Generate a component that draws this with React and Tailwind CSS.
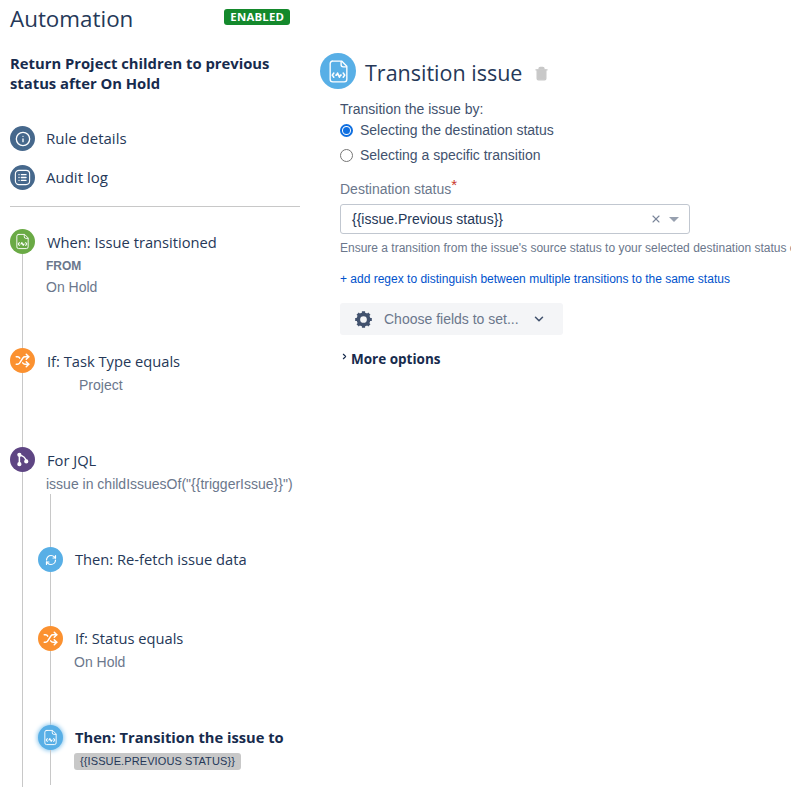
import { Shuffle, RefreshCw, Info, Trash2, ChevronDown, ChevronRight, X } from 'lucide-react';

const titleFont = "font-['Open_Sans',sans-serif]";

// document with a little wave through it, used by the transition steps
function IssueIcon({ size = 17 }) {
  return (
    <svg width={size} height={size} viewBox="0 0 24 24" fill="none" stroke="currentColor" strokeWidth="1.3" strokeLinejoin="round" strokeLinecap="round">
      <path d="M7 2h8l5 5v12.500a2.500 2.500 0 0 1-2.500 2.500h-11A2.500 2.500 0 0 1 4 19.500v-15A2.500 2.500 0 0 1 7 2z" />
      <path d="M14.500 2.500v3a2 2 0 0 0 2 2h3" />
      <path d="M7.500 13.500l-1.500 2 1.500 2M16.500 13.500l1.500 2-1.500 2M9.500 15.500h.6l1-2 1.800 4 1-2h.6" strokeWidth="1.500" />
    </svg>
  );
}

function ListIcon() {
  return (
    <svg width="19" height="19" viewBox="0 0 24 24" fill="none" stroke="currentColor" strokeWidth="1.400" strokeLinecap="round">
      <rect x="3" y="3" width="18" height="18" rx="4.500" />
      <path d="M10.500 8.500h6M10.500 12h6M10.500 15.500h6M7.500 8.500h.2M7.500 12h.2M7.500 15.500h.2" strokeWidth="1.600" />
    </svg>
  );
}

function BranchIcon() {
  return (
    <svg width="15" height="15" viewBox="0 0 24 24" fill="currentColor" stroke="currentColor" strokeWidth="2.400">
      <circle cx="7" cy="4.500" r="2.200" />
      <circle cx="7" cy="19.500" r="2.200" />
      <circle cx="18" cy="15" r="2.200" />
      <path d="M7 4.500v15M7 5c6 1 10 4 11 10" fill="none" />
    </svg>
  );
}

function GearIcon() {
  return (
    <svg width="19" height="19" viewBox="0 0 24 24" fill="none" stroke="currentColor">
      <circle cx="12" cy="12" r="6.500" strokeWidth="4.500" />
      <path d="M12 1.500v4M12 18.500v4M1.500 12h4M18.500 12h4M4.600 4.600l2.800 2.800M16.600 16.600l2.800 2.800M19.400 4.600l-2.800 2.800M7.400 16.600l-2.800 2.800" strokeWidth="4" />
    </svg>
  );
}

function Circle({ color, glow, children }) {
  return (
    <div className={`flex h-[25px] w-[25px] shrink-0 items-center justify-center rounded-full text-white ${color} ${glow ? 'shadow-[0_0_4px_1px_#8ec9ee]' : ''}`}>
      {children}
    </div>
  );
}

function Step({ icon, color, glow, height, children }) {
  return (
    <div className="flex" style={{ minHeight: height }}>
      <div className="flex w-[25px] shrink-0 flex-col items-center">
        <Circle color={color} glow={glow}>{icon}</Circle>
        <div className="w-px flex-1 bg-[#c8c8c8]" />
      </div>
      <div className="ml-[12px] min-w-0 flex-1">{children}</div>
    </div>
  );
}

function StepTitle({ bold, nested, children }) {
  return (
    <div className={`${titleFont} ${nested ? 'mt-[2px]' : 'mt-[3px]'} whitespace-nowrap text-[14.700px] leading-[20px] ${bold ? 'font-bold text-[#172b4d]' : 'text-[#253858]'}`}>
      {children}
    </div>
  );
}

function Sub({ className = '', children }) {
  return <div className={`font-['Liberation_Sans',sans-serif] whitespace-nowrap text-[14px] leading-[20px] text-[#6b778c] ${className}`}>{children}</div>;
}

function Radio({ checked, children }) {
  return (
    <label className="flex h-[25px] items-center">
      {checked ? (
        <span className="flex h-[13px] w-[13px] items-center justify-center rounded-full border-2 border-[#0f6fe0]">
          <span className="h-[7px] w-[7px] rounded-full bg-[#0f6fe0]" />
        </span>
      ) : (
        <span className="h-[13px] w-[13px] rounded-full border border-[#767676]" />
      )}
      <span className="ml-[7px]">{children}</span>
    </label>
  );
}

export default function App() {
  return (
    <div className="flex h-[787px] w-[791px] overflow-hidden bg-white text-[#172b4d]">
      {/* left column, rule outline */}
      <div className="ml-[10px] w-[290px] shrink-0">
        <div className="flex h-[38px] items-start">
          <h1 className={`${titleFont} text-[22.400px] leading-[38px] text-[#253858]`}>Automation</h1>
          <span className={`${titleFont} ml-[91px] mt-[9px] rounded-[3px] bg-[#14892c] px-[6px] text-[11.400px] font-bold leading-[16px] tracking-[0.2px] text-white`}>ENABLED</span>
        </div>
        <h2 className={`${titleFont} mt-[15px] text-[14.800px] font-bold leading-[20px] text-[#172b4d]`}>
          Return Project children to previous<br />status after On Hold
        </h2>

        <div className="mt-[33px] flex items-center">
          <Circle color="bg-[#46688c]"><Info size={16} strokeWidth={2} /></Circle>
          <span className={`${titleFont} ml-[11px] text-[15px] text-[#253858]`}>Rule details</span>
        </div>
        <div className="mt-[14px] flex items-center">
          <Circle color="bg-[#46688c]"><ListIcon /></Circle>
          <span className={`${titleFont} ml-[11px] text-[15px] text-[#253858]`}>Audit log</span>
        </div>
        <div className="mt-[16px] h-px bg-[#c8c8c8]" />

        <div className="mt-[22px]">
          <Step icon={<IssueIcon />} color="bg-[#6aaa45]" height={119}>
            <StepTitle>When: Issue transitioned</StepTitle>
            <div className="-ml-px mt-[4px] font-['Liberation_Sans',sans-serif] text-[12px] font-bold leading-[20px] text-[#6b778c]">FROM</div>
            <Sub className="-ml-px mt-px">On Hold</Sub>
          </Step>
          <Step icon={<Shuffle size={15} strokeWidth={2.400} />} color="bg-[#fb9130]" height={99}>
            <StepTitle>If: Task Type equals</StepTitle>
            <Sub className="ml-[32px] mt-[4px]">Project</Sub>
          </Step>
          <Step icon={<BranchIcon />} color="bg-[#5e4583]" height={360}>
            <StepTitle>For JQL</StepTitle>
            <Sub className="-ml-px mt-[4px]">issue in childIssuesOf("{'{{'}triggerIssue{'}}'}")</Sub>
            <div className="-ml-[9px]">
              <div className="ml-[12px] h-[53px] w-px bg-[#c8c8c8]" />
              <Step icon={<RefreshCw size={12} strokeWidth={2.400} />} color="bg-[#58afe6]" height={79}>
                <StepTitle nested>Then: Re-fetch issue data</StepTitle>
              </Step>
              <Step icon={<Shuffle size={15} strokeWidth={2.400} />} color="bg-[#fb9130]" height={99}>
                <StepTitle nested>If: Status equals</StepTitle>
                <Sub className="-ml-px mt-[4px]">On Hold</Sub>
              </Step>
              <Step icon={<IssueIcon />} color="bg-[#58afe6]" glow height={60}>
                <StepTitle bold nested>Then: Transition the issue to</StepTitle>
                <div className="-ml-px mt-[4px] inline-block rounded-[3px] bg-[#c8c8c8] px-[6px] font-['Liberation_Sans',sans-serif] text-[11px] leading-[17px] tracking-[0.100px] text-[#253858]">
                  {'{{'}ISSUE.PREVIOUS STATUS{'}}'}
                </div>
              </Step>
            </div>
          </Step>
        </div>
      </div>

      {/* right column, selected step */}
      <div className="ml-[20px] min-w-0 flex-1 font-['Liberation_Sans',sans-serif] text-[14px] text-[#42526e]">
        <div className="mt-[53px] flex h-[36px] items-start">
          <div className="flex h-[36px] w-[36px] items-center justify-center rounded-full bg-[#58afe6] text-white">
            <IssueIcon size={25} />
          </div>
          <span className={`${titleFont} ml-[9px] mt-[2px] text-[21.500px] leading-[36px] text-[#253858]`}>Transition issue</span>
          <Trash2 size={15} className="ml-[12px] mt-[13px] fill-[#c8c8c8] text-[#c8c8c8]" />
        </div>

        <div className="ml-[20px]">
          <div className="mt-[11px] leading-[18px]">Transition the issue by:</div>
          <Radio checked>Selecting the destination status</Radio>
          <Radio>Selecting a specific transition</Radio>

          <div className="mt-[12px] leading-[18px] text-[#6b778c]">
            Destination status<sup className="top-[-4px] text-[15px] text-[#c9372c]">*</sup>
          </div>
          <div className="mt-[6px] flex h-[30px] w-[350px] items-center rounded-[3px] border border-[#c1c7d0] pl-[11px] pr-[10px] text-[#253858]">
            <span className="flex-1">{'{{'}issue.Previous status{'}}'}</span>
            <X size={12} strokeWidth={2.200} className="text-[#7a869a]" />
            <span className="ml-[7px] h-0 w-0 border-x-[5px] border-t-[5px] border-x-transparent border-t-[#97a0af]" />
          </div>
          <div className="mt-[6px] whitespace-nowrap text-[12px] leading-[16px] text-[#6b778c]">
            Ensure a transition from the issue's source status to your selected destination status exists.
          </div>
          <div className="mt-[15px] whitespace-nowrap text-[12px] leading-[16px] text-[#0052cc]">
            + add regex to distinguish between multiple transitions to the same status
          </div>
          <div className="mt-[16px] flex h-[32px] w-[223px] items-center rounded-[3px] bg-[#f4f5f7] pl-[14px]">
            <GearIcon />
            <span className="ml-[11px] text-[#6b778c]">Choose fields to set...</span>
            <ChevronDown size={14} strokeWidth={2.600} className="ml-[13px] text-[#42526e]" />
          </div>
          <div className="mt-[14px] flex items-center">
            <ChevronRight size={9} strokeWidth={3} className="mb-[5px] text-[#172b4d]" />
            <span className={`${titleFont} ml-[2px] text-[13.500px] font-bold leading-[20px] text-[#172b4d]`}>More options</span>
          </div>
        </div>
      </div>
    </div>
  );
}
